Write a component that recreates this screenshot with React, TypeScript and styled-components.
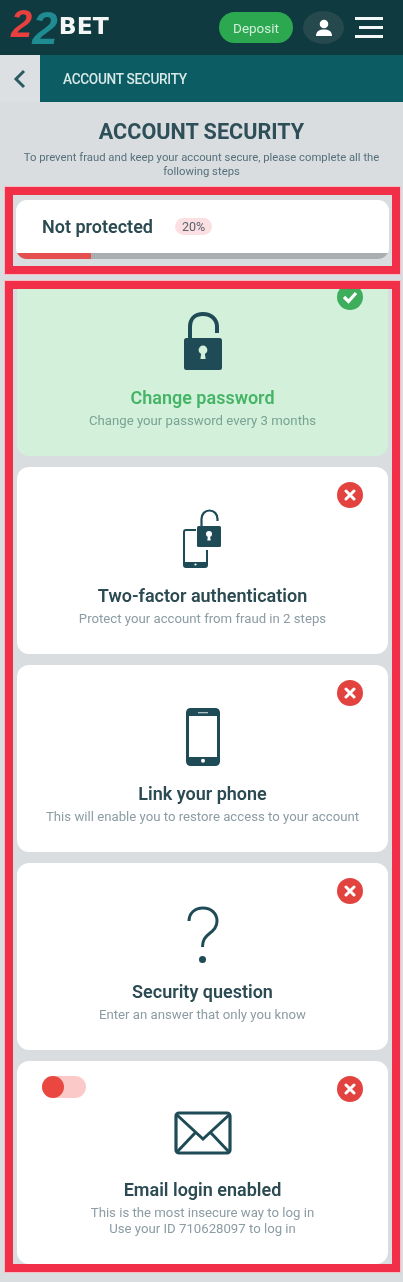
import React from "react";
import styled, { createGlobalStyle } from "styled-components";

const Global = createGlobalStyle`
  html, body { margin: 0; padding: 0; background: #d9dde0; }
  body { font-family: Roboto, "Liberation Sans", sans-serif; color: #2b4a52; }
  * { box-sizing: border-box; }
`;

const Page = styled.div`
  width: 403px;
  height: 1282px;
  overflow: hidden;
  background: #d9dde0;
  filter: blur(0.4px);
`;

const Header = styled.header`
  height: 55px;
  background: #0e3a40;
  display: flex;
  align-items: center;
  padding: 0 20px 0 11px;
`;

const Logo = styled.div`
  display: flex;
  align-items: center;
  height: 55px;
  flex: 1;
`;

const LogoTwo = styled.span<{ $tone: string; $size: number; $lift: number }>`
  font-family: "Liberation Sans", sans-serif;
  font-weight: 700;
  font-style: italic;
  font-size: ${(p) => p.$size}px;
  line-height: 1;
  color: ${(p) => p.$tone};
  margin-top: ${(p) => p.$lift}px;
`;

const LogoWord = styled.span`
  font-family: "DejaVu Sans", sans-serif;
  font-weight: 700;
  font-size: 23.5px;
  line-height: 1;
  color: #f4f6f6;
  margin-left: 1px;
  margin-top: -2px;
`;

const DepositButton = styled.div`
  width: 74px;
  height: 31px;
  border-radius: 16px;
  background: #2ca850;
  color: #cfeeda;
  font-size: 13.5px;
  display: flex;
  align-items: center;
  justify-content: center;
`;

const UserButton = styled.div`
  width: 41px;
  height: 33px;
  border-radius: 50%;
  background: #26494e;
  margin-left: 10px;
  display: flex;
  align-items: center;
  justify-content: center;
`;

const Burger = styled.div`
  width: 28px;
  margin-left: 11px;
  display: flex;
  flex-direction: column;
  align-items: flex-end;
  gap: 6px;
`;

const BurgerBar = styled.span<{ $width: number }>`
  display: block;
  height: 3px;
  width: ${(p) => p.$width}px;
  background: #f4f7f7;
`;

const SubNav = styled.nav`
  height: 47px;
  display: flex;
`;

const BackCell = styled.div`
  width: 40px;
  background: #dce0e3;
  display: flex;
  align-items: center;
  justify-content: center;
`;

const SubNavBar = styled.div`
  flex: 1;
  background: #0b5d63;
  display: flex;
  align-items: center;
  padding-left: 23px;
`;

const SubNavTitle = styled.span`
  color: #d8e8e8;
  font-size: 15.5px;
  font-weight: 500;
  letter-spacing: -0.35px;
  transform: scaleX(0.88);
  transform-origin: left center;
`;

const Intro = styled.section`
  text-align: center;
  padding: 17px 20px 0;
  height: 85px;
`;

const Title = styled.h1`
  margin: 0;
  font-size: 21.6px;
  line-height: 26px;
  font-weight: 700;
  color: #2e4f58;
`;

const Lead = styled.p`
  margin: 6px -4px 0;
  font-size: 11.3px;
  line-height: 14px;
  color: #54707a;
`;

const Frame = styled.div`
  margin: 0 3px 0 5px;
  border: 8px solid #f12f49;
  box-shadow: 0 0 0 1px #f7bcc4;
  overflow: hidden;
`;

const ProgressFrame = styled(Frame)`
  height: 87px;
  padding: 5px 3px 0;
`;

const ProgressCard = styled.div`
  height: 59px;
  background: #fff;
  border-radius: 11px;
  overflow: hidden;
  display: flex;
  flex-direction: column;
`;

const ProgressBody = styled.div`
  flex: 1;
  display: flex;
  align-items: center;
  padding-left: 26px;
  gap: 22px;
`;

const ProgressLabel = styled.span`
  font-size: 18px;
  font-weight: 600;
  color: #2b4a52;
`;

const Percent = styled.span`
  font-size: 12.5px;
  line-height: 17px;
  padding: 0 7px;
  border-radius: 9px;
  background: #fbdfe2;
  color: #55636a;
`;

const Track = styled.div`
  height: 6px;
  background: #a9aeb1;
`;

const TrackFill = styled.div`
  height: 100%;
  background: #e5504f;
`;

const ListFrame = styled(Frame)`
  margin-top: 7px;
  height: 991px;
  padding: 0 4px;
`;

const List = styled.div`
  margin-top: -20px;
  display: flex;
  flex-direction: column;
  gap: 11px;
`;

const Card = styled.article<{ $done?: boolean; $height: number }>`
  position: relative;
  height: ${(p) => p.$height}px;
  border-radius: 12px;
  background: ${(p) => (p.$done ? "#d3f1da" : "#fff")};
  padding-top: 42px;
  text-align: center;
`;

const IconSlot = styled.div`
  height: 60px;
  display: flex;
  align-items: center;
  justify-content: center;
`;

const CardTitle = styled.h2<{ $done?: boolean }>`
  margin: 15px 0 0;
  font-size: 18px;
  line-height: 24px;
  font-weight: 600;
  color: ${(p) => (p.$done ? "#46b467" : "#2b4a52")};
`;

const CardLines = styled.div`
  margin-top: 3px;
`;

const CardText = styled.p<{ $done?: boolean }>`
  margin: 0;
  font-size: 13.2px;
  line-height: 16px;
  color: ${(p) => (p.$done ? "#79a394" : "#8c9ca3")};
`;

const Status = styled.div<{ $ok?: boolean }>`
  position: absolute;
  top: 15px;
  right: 25px;
  width: 26px;
  height: 26px;
  border-radius: 50%;
  background: ${(p) => (p.$ok ? "#3eae5c" : "#e2433f")};
  display: flex;
  align-items: center;
  justify-content: center;
`;

const Toggle = styled.div`
  position: absolute;
  top: 15px;
  left: 25px;
  width: 44px;
  height: 22px;
  border-radius: 11px;
  background: #fcc9c9;
`;

const ToggleKnob = styled.span`
  display: block;
  width: 22px;
  height: 22px;
  border-radius: 50%;
  background: #e9473f;
`;

const ink = "#1f4b57";

const OpenLock = () => (
  <svg width="38" height="58" viewBox="0 0 38 58">
    <path d="M6 27V15C6 7 11 2 19 2s14 5 14 13v6" fill="none" stroke={ink} strokeWidth="4" />
    <rect x="0" y="26" width="38" height="32" rx="2.5" fill={ink} />
    <circle cx="19" cy="38" r="4.4" fill="#d3f1da" />
    <path d="M17.4 40h3.2l1 7h-5.2z" fill="#d3f1da" />
  </svg>
);

const PhoneLock = () => (
  <svg width="40" height="60" viewBox="0 0 40 60">
    <path d="M13 21H3a2 2 0 0 0-2 2v33a2 2 0 0 0 2 2h19a2 2 0 0 0 2-2V41" fill="none" stroke={ink} strokeWidth="2" />
    <path d="M1 53h23v5H1z" fill={ink} />
    <circle cx="12.5" cy="55.5" r="1.1" fill="#fff" />
    <path d="M18.5 18v-8c0-5 3.5-8.5 8-8.5s8 3.5 8 8.5v2" fill="none" stroke={ink} strokeWidth="2.2" />
    <rect x="14" y="17" width="24" height="21" rx="1.5" fill={ink} />
    <circle cx="26" cy="25" r="3" fill="#fff" />
    <path d="M25 26.5h2l.7 5h-3.4z" fill="#fff" />
  </svg>
);

const PhoneIcon = () => (
  <svg width="34" height="58" viewBox="0 0 34 58">
    <rect x="1.5" y="1.5" width="31" height="55" rx="3" fill="#fff" stroke={ink} strokeWidth="3" />
    <rect x="1.5" y="1.5" width="31" height="6.5" fill={ink} />
    <rect x="1.5" y="49" width="31" height="7.5" fill={ink} />
    <rect x="12" y="4" width="10" height="1.3" fill="#a9c0c4" />
    <circle cx="17" cy="52.7" r="2" fill="#fff" />
  </svg>
);

const QuestionIcon = () => (
  <svg width="32" height="58" viewBox="0 0 32 58">
    <path d="M2 15C2 7 8 2 16 2s14 5.5 14 13c0 6-3 9-7.5 12.5C18 31 15.5 34 15.5 41" fill="none" stroke={ink} strokeWidth="3" />
    <circle cx="15.5" cy="53.5" r="3.5" fill={ink} />
  </svg>
);

const EnvelopeIcon = () => (
  <svg width="58" height="44" viewBox="0 0 58 44">
    <rect x="2" y="2" width="54" height="40" rx="3" fill="#fff" stroke={ink} strokeWidth="3.2" />
    <path d="M3 4l26 24L55 4M3 41l18-19M55 41L37 22" fill="none" stroke={ink} strokeWidth="3" />
  </svg>
);

const CheckMark = () => (
  <svg width="16" height="14" viewBox="0 0 16 14">
    <path d="M2 7l4.5 4.5L14 3" fill="none" stroke="#fff" strokeWidth="3.2" />
  </svg>
);

const CrossMark = () => (
  <svg width="12" height="12" viewBox="0 0 12 12">
    <path d="M2 2l8 8M10 2l-8 8" fill="none" stroke="#fff" strokeWidth="3" strokeLinecap="round" />
  </svg>
);

const steps = [
  { title: "Change password", text: ["Change your password every 3 months"], icon: <OpenLock />, done: true, height: 187 },
  { title: "Two-factor authentication", text: ["Protect your account from fraud in 2 steps"], icon: <PhoneLock />, height: 187 },
  { title: "Link your phone", text: ["This will enable you to restore access to your account"], icon: <PhoneIcon />, height: 187 },
  { title: "Security question", text: ["Enter an answer that only you know"], icon: <QuestionIcon />, height: 187 },
  {
    title: "Email login enabled",
    text: ["This is the most insecure way to log in", "Use your ID 710628097 to log in"],
    icon: <EnvelopeIcon />,
    toggle: true,
    height: 203,
  },
];

export default function App() {
  return (
    <Page>
      <Global />
      <Header>
        <Logo>
          <LogoTwo $tone="#e8403f" $size={38} $lift={-7}>2</LogoTwo>
          <LogoTwo $tone="#1f8c93" $size={46} $lift={1}>2</LogoTwo>
          <LogoWord>BET</LogoWord>
        </Logo>
        <DepositButton>Deposit</DepositButton>
        <UserButton>
          <svg width="18" height="18" viewBox="0 0 18 18">
            <circle cx="9" cy="5" r="4.3" fill="#fff" />
            <path d="M1 17c0-5 3.5-6.5 8-6.5s8 1.5 8 6.5z" fill="#fff" />
          </svg>
        </UserButton>
        <Burger>
          <BurgerBar $width={28} />
          <BurgerBar $width={24} />
          <BurgerBar $width={28} />
        </Burger>
      </Header>
      <SubNav>
        <BackCell>
          <svg width="14" height="20" viewBox="0 0 14 20">
            <path d="M11 2L3 10l8 8" fill="none" stroke="#2b5a63" strokeWidth="3" />
          </svg>
        </BackCell>
        <SubNavBar>
          <SubNavTitle>ACCOUNT SECURITY</SubNavTitle>
        </SubNavBar>
      </SubNav>
      <Intro>
        <Title>ACCOUNT SECURITY</Title>
        <Lead>To prevent fraud and keep your account secure, please complete all the following steps</Lead>
      </Intro>
      <ProgressFrame>
        <ProgressCard>
          <ProgressBody>
            <ProgressLabel>Not protected</ProgressLabel>
            <Percent>20%</Percent>
          </ProgressBody>
          <Track>
            <TrackFill style={{ width: "20%" }} />
          </Track>
        </ProgressCard>
      </ProgressFrame>
      <ListFrame>
        <List>
          {steps.map((s) => (
            <Card key={s.title} $done={s.done} $height={s.height}>
              {s.toggle && (
                <Toggle>
                  <ToggleKnob />
                </Toggle>
              )}
              <Status $ok={s.done}>{s.done ? <CheckMark /> : <CrossMark />}</Status>
              <IconSlot>{s.icon}</IconSlot>
              <CardTitle $done={s.done}>{s.title}</CardTitle>
              <CardLines>
                {s.text.map((line) => (
                  <CardText key={line} $done={s.done}>{line}</CardText>
                ))}
              </CardLines>
            </Card>
          ))}
        </List>
      </ListFrame>
    </Page>
  );
}
